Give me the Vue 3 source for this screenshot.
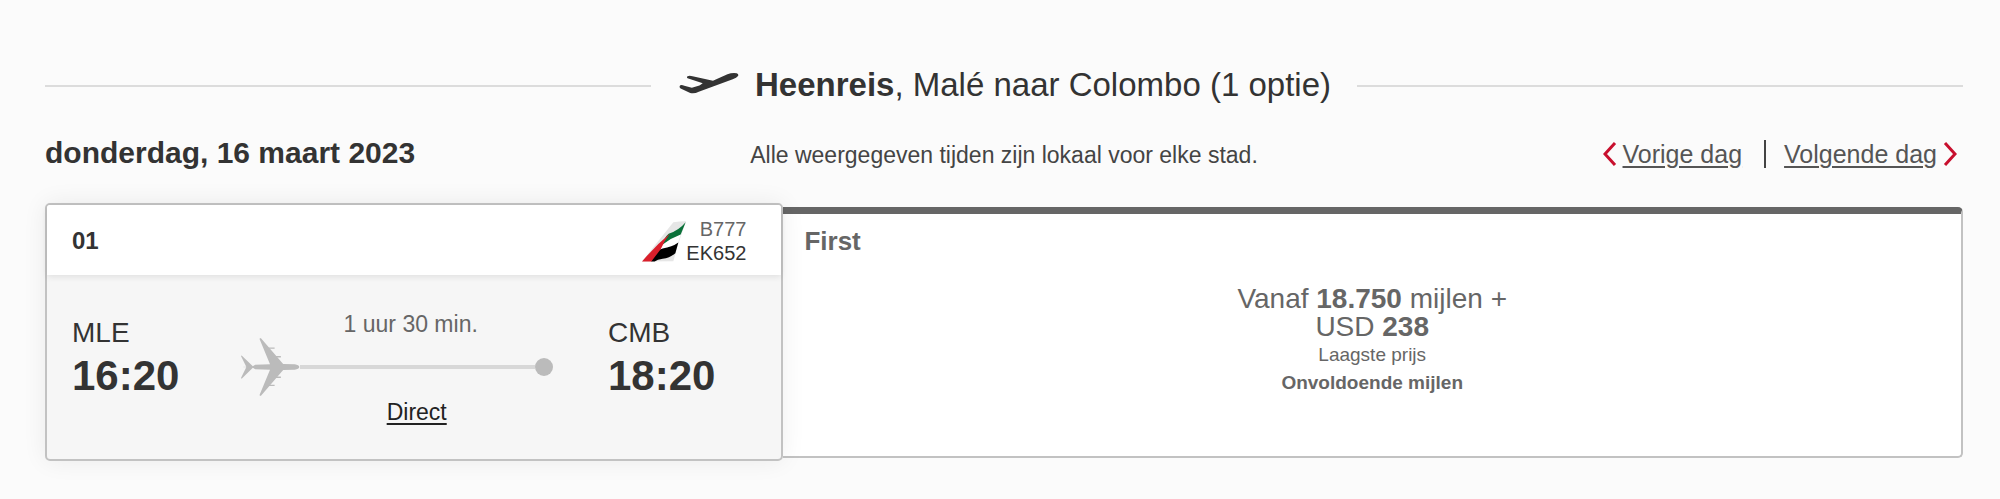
<script setup>
const origin = { code: 'MLE', time: '16:20' }
const destination = { code: 'CMB', time: '18:20' }
</script>

<template>
  <main class="page">
    <h1 class="title">
      <svg class="takeoff" viewBox="60 64 182 68" aria-hidden="true">
        <path d="M86 76 Q91 73 101 76 L163 90 L207 70 Q221 65 235 67 Q242 70 239 75 Q235 81 223 85 L120 123 Q107 130 94 127 L65 113 Q59 108 64 103 Q69 101 76 105 L99 111 L122 104 L132 97 L86 82 Q82 79 86 76Z" />
      </svg>
      <span><b>Heenreis</b>, Malé naar Colombo (1 optie)</span>
    </h1>

    <div class="day-bar">
      <h2 class="date">donderdag, 16 maart 2023</h2>
      <p class="note">Alle weergegeven tijden zijn lokaal voor elke stad.</p>
      <nav class="days">
        <a href="#vorige" class="day-link">
          <svg class="chevron" viewBox="0 0 14 24" aria-hidden="true"><path d="M12 1 L2 12 L12 23" /></svg>
          <span>Vorige dag</span>
        </a>
        <span class="divider"></span>
        <a href="#volgende" class="day-link">
          <span>Volgende dag</span>
          <svg class="chevron" viewBox="0 0 14 24" aria-hidden="true"><path d="M2 1 L12 12 L2 23" /></svg>
        </a>
      </nav>
    </div>

    <article class="option">
      <section class="flight">
        <header class="flight-head">
          <strong class="number">01</strong>
          <svg class="tail" viewBox="0 0 132 122" aria-hidden="true">
            <path fill="#e6e6e6" d="M0 121 L94 3 Q112 0 132 0 L108 70 L94 120Z" />
            <path fill="#fff" d="M62 68 Q88 49 117 38 L108 66 Q88 80 54 84Z" />
            <path fill="#0a7139" d="M131 3 L116 40 Q88 50 62 70 Q66 50 80 38 Q112 26 131 3Z" />
            <path fill="#000" d="M27 121 Q38 88 62 82 Q90 78 109 64 L100 96 Q84 110 62 113 Q46 115 38 121Z" />
            <path fill="#da1f2b" d="M0 121 Q42 72 84 37 Q66 60 56 84 L28 121Z" />
          </svg>
          <div class="codes">
            <span class="aircraft">B777</span>
            <span>EK652</span>
          </div>
        </header>
        <div class="flight-body">
          <div class="airport">
            <span class="code">{{ origin.code }}</span>
            <time class="time">{{ origin.time }}</time>
          </div>
          <div class="route">
            <span class="duration">1 uur 30 min.</span>
            <div class="track">
              <svg class="plane" viewBox="60 105 180 182" aria-hidden="true">
                <path d="M118 110 L122 108 L190 187 L225 188 Q238 190 239 196 Q238 202 225 204 L190 205 L122 284 L118 282 L150 204 L105 203 L98 198 L64 232 L62 229 L78 197 L66 196 L78 195 L62 163 L64 161 L98 194 L105 189 L150 188Z" />
                <path d="M145 137h19v4h-19z M164 163h19v4h-19z M164 225h19v4h-19z M145 250h19v4h-19z" />
              </svg>
              <span class="line"></span>
              <span class="dot"></span>
            </div>
            <a href="#details" class="direct">Direct</a>
          </div>
          <div class="airport">
            <span class="code">{{ destination.code }}</span>
            <time class="time">{{ destination.time }}</time>
          </div>
        </div>
      </section>

      <section class="fare">
        <h3 class="cabin">First</h3>
        <div class="offer">
          <p class="price">Vanaf <b>18.750</b> mijlen +<br />USD <b>238</b></p>
          <p class="small">Laagste prijs</p>
          <p class="small"><b>Onvoldoende mijlen</b></p>
        </div>
      </section>
    </article>
  </main>
</template>

<style>
body {
  background: #fbfbfb;
}
</style>

<style scoped>
.page {
  padding: 65px 37px 38px 45px;
  font-family: "Liberation Sans", Arial, sans-serif;
  color: #333;
}
h1, h2, h3, p {
  margin: 0;
}
.title {
  display: flex;
  align-items: center;
  font-size: 33px;
  line-height: 40px;
  font-weight: 400;
}
.title::before,
.title::after {
  content: "";
  flex: 1;
  height: 2px;
  margin-top: 2px;
  background: #dcdcdc;
}
.title::before {
  margin-right: 28px;
}
.title::after {
  margin-left: 26px;
}
.takeoff {
  width: 60px;
  height: 23px;
  margin: 0 16px 4px 0;
  fill: #333;
}
.day-bar {
  display: grid;
  grid-template-columns: 1fr auto 1fr;
  align-items: center;
  margin-top: 30px;
}
.date {
  font-size: 30px;
  line-height: 36px;
}
.note {
  padding-top: 4px;
  font-size: 23px;
  line-height: 28px;
  color: #444;
}
.days {
  display: flex;
  align-items: center;
  justify-content: flex-end;
  padding: 2px 6px 0 0;
}
.day-link {
  display: flex;
  align-items: center;
  gap: 6px;
  font-size: 25px;
  line-height: 28px;
  color: #555;
  text-underline-offset: 3px;
}
.chevron {
  width: 14px;
  height: 24px;
  fill: none;
  stroke: #c8102e;
  stroke-width: 3;
}
.divider {
  width: 2px;
  height: 28px;
  margin: 0 18px 0 22px;
  background: #444;
}
.option {
  display: grid;
  grid-template-columns: 77fr 123fr;
  margin-top: 32px;
}
.flight {
  position: relative;
  z-index: 1;
  min-width: 0;
  border: 2px solid #c2c2c2;
  border-radius: 5px;
  background: #f6f6f6;
  box-shadow: 0 0 24px rgba(0, 0, 0, 0.07);
}
.flight-head {
  display: flex;
  align-items: center;
  height: 70px;
  padding: 2px 35px 0 25px;
  box-sizing: border-box;
  border-radius: 3px 3px 0 0;
  background: #fff;
  box-shadow: 0 2px 6px rgba(0, 0, 0, 0.09);
}
.number {
  margin-right: auto;
  font-size: 24px;
}
.tail {
  width: 44px;
  height: 41px;
}
.codes {
  display: flex;
  flex-direction: column;
  align-items: flex-end;
  font-size: 20px;
  line-height: 24px;
}
.aircraft {
  color: #666;
}
.flight-body {
  display: flex;
  align-items: flex-start;
  padding: 33px 66px 33px 25px;
}
.airport {
  display: flex;
  flex-direction: column;
  padding-top: 7px;
}
.code {
  font-size: 28px;
  line-height: 36px;
}
.time {
  font-size: 42px;
  line-height: 50px;
  font-weight: 700;
}
.route {
  display: flex;
  flex: 1;
  flex-direction: column;
  align-items: center;
  margin: 0 55px 0 61px;
  padding-top: 2px;
  font-size: 23px;
  line-height: 28px;
}
.duration {
  padding-left: 28px;
  color: #666;
}
.track {
  display: flex;
  align-items: center;
  width: 100%;
  height: 58px;
}
.plane {
  width: 60px;
  height: 60px;
  fill: #bbb;
}
.line {
  flex: 1;
  height: 4px;
  background: #d8d8d8;
}
.dot {
  width: 18px;
  height: 18px;
  border-radius: 50%;
  background: #bbb;
}
.direct {
  margin-left: 40px;
  padding-top: 2px;
  color: #222;
  text-underline-offset: 3px;
}
.fare {
  margin: 4px 0 3px;
  padding: 11px 21px 0;
  border: 2px solid #c2c2c2;
  border-top: 7px solid #666;
  border-left: 0;
  border-radius: 0 5px 5px 0;
  background: #fff;
  color: #666;
}
.cabin {
  font-size: 26px;
  line-height: 32px;
}
.offer {
  margin-top: 28px;
  text-align: center;
  line-height: 28px;
}
.price {
  font-size: 28px;
}
.small {
  font-size: 19px;
}
</style>
